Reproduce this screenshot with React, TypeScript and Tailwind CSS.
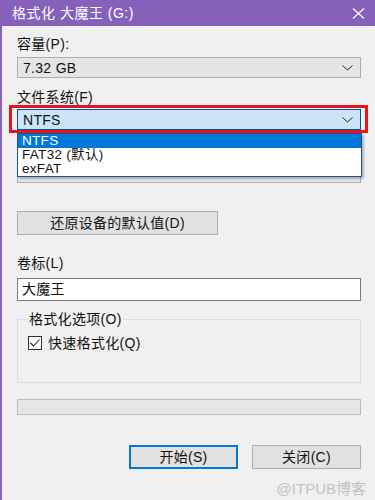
import React from 'react';

const font = { fontFamily: '"Liberation Sans", "Noto Sans CJK SC", sans-serif' };

const Chevron: React.FC = () => (
  <svg width="11" height="6" viewBox="0 0 11 6" className="shrink-0">
    <path d="M0.5 0.5 L5.5 5 L10.5 0.5" fill="none" stroke="#222" strokeWidth="1" />
  </svg>
);

const ComboBox: React.FC<{ value: string; active?: boolean; hidden?: boolean }> = ({ value, active = false, hidden = false }) => (
  <div
    className={
      'flex h-[21px] w-[344px] items-center justify-between pl-[5px] pr-[7px] border ' +
      (active ? 'bg-[#cce4f7] border-[#005499]' : 'bg-[#e5e5e5] border-[#adadad]')
    }
  >
    <span className={'leading-none' + (hidden ? ' invisible' : '')}>{value}</span>
    <Chevron />
  </div>
);

const Button: React.FC<{ label: string; width: string; primary?: boolean }> = ({ label, primary = false, width }) => (
  <div
    className={
      'flex h-[24px] items-center justify-center bg-[#e1e1e1] ' +
      width +
      (primary ? ' border-2 border-[#0078d7]' : ' border border-[#adadad]')
    }
  >
    {label}
  </div>
);

const FormatDialog: React.FC = () => {
  const options = ['NTFS', 'FAT32 (默认)', 'exFAT'];

  return (
    <div className="flex h-[500px] w-[375px] flex-col bg-[#f0f0f0] text-[14px] text-[#111] tracking-[0.3px]" style={font}>
      {/* title bar */}
      <div className="flex h-[26px] shrink-0 items-center justify-between bg-[#8661b9] pl-[12px] pr-[10px] text-white">
        <span className="text-[14px] tracking-[0.5px]">格式化 大魔王 (G:)</span>
        <svg width="13" height="11" viewBox="0 0 13 11">
          <path d="M1 0.5 L12 10.5 M12 0.5 L1 10.5" stroke="#fff" strokeWidth="1.2" />
        </svg>
      </div>

      <div className="flex flex-1 flex-col border-l-2 border-[#8661b9] pl-[15px]">
        <div className="mt-[10px] h-[16px] leading-[16px]">容量(P):</div>
        <div className="mt-[5px]">
          <ComboBox value="7.32 GB" />
        </div>

        <div className="mt-[11px] h-[16px] leading-[16px]">文件系统(F)</div>
        <div className="relative mt-[4px]">
          <ComboBox value="NTFS" active />
          {/* red highlight */}
          <div className="absolute left-[-8px] top-[-4px] h-[28px] w-[359px] border-[3px] border-[#e8141c]" />
          {/* open list */}
          <div className="absolute left-0 top-[24px] z-10 flex w-[345px] flex-col border border-[#1f4e8c] bg-white shadow-[2px_2px_2px_rgba(0,0,0,0.25)]">
            {options.map((o, i) => (
              <div
                key={o}
                className={
                  'h-[14px] overflow-hidden pl-[4px] text-[13.5px] leading-[14px] ' +
                  (i === 0 ? 'bg-[#0078d7] text-white' : 'text-[#111]')
                }
              >
                {o}
              </div>
            ))}
          </div>
        </div>

        {/* allocation size row, covered by the open list */}
        <div className="invisible mt-[12px] h-[16px] leading-[16px]">分配单元大小(A)</div>
        <div className="mt-[4px]">
          <ComboBox value="4096 字节" hidden />
        </div>

        <div className="mt-[28px]">
          <Button label="还原设备的默认值(D)" width="w-[201px]" />
        </div>

        <div className="mt-[20px] h-[16px] leading-[16px]">卷标(L)</div>
        <div className="mt-[7px] flex h-[23px] w-[344px] items-center border border-[#7a7a7a] bg-white pl-[4px]">
          大魔王
        </div>

        <fieldset className="mt-[10px] h-[72px] w-[344px] border border-[#dcdcdc] pl-[10px]">
          <legend className="px-[1px] leading-[16px]">格式化选项(O)</legend>
          <div className="mt-[8px] flex items-center gap-[6px]">
            <svg width="14" height="14" viewBox="0 0 14 14">
              <rect x="0.5" y="0.5" width="13" height="13" fill="#fff" stroke="#333" />
              <path d="M2.5 7 L5.5 10 L11.5 3.5" fill="none" stroke="#222" strokeWidth="1.1" />
            </svg>
            <span className="leading-[16px]">快速格式化(Q)</span>
          </div>
        </fieldset>

        <div className="mt-[16px] h-[16px] w-[344px] border border-[#bcbcbc] bg-[#e6e6e6]" />

        <div className="mt-[30px] flex w-[344px] justify-end gap-[14px]">
          <Button label="开始(S)" width="w-[109px]" primary />
          <Button label="关闭(C)" width="w-[109px]" />
        </div>

        <div className="mt-[9px] flex w-[349px] justify-end text-[15px] tracking-normal text-[#c2c2c2]">@ITPUB博客</div>
      </div>
    </div>
  );
};

export default function App() {
  return <FormatDialog />;
}
